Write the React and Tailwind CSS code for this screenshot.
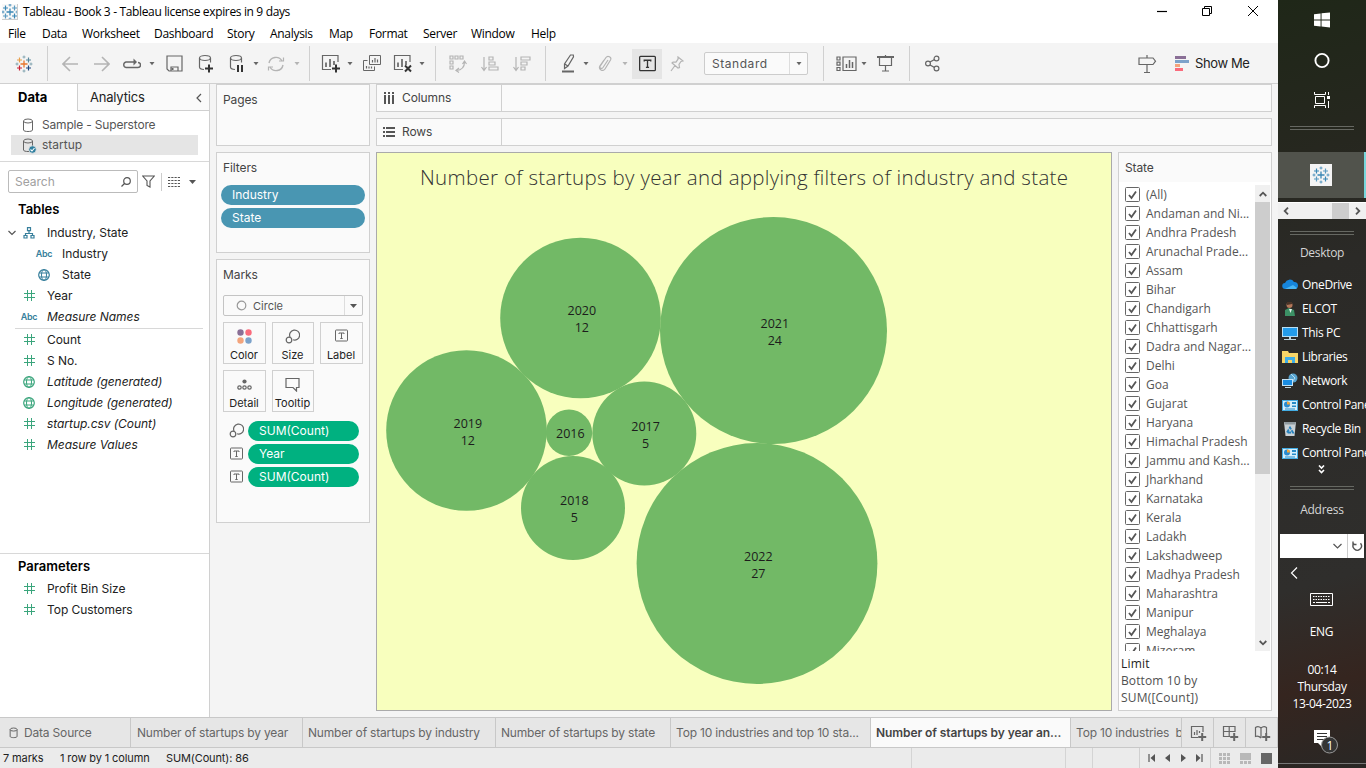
import React from "react";

const STATES = ["(All)", "Andaman and Ni...", "Andhra Pradesh", "Arunachal Prade...", "Assam", "Bihar", "Chandigarh", "Chhattisgarh", "Dadra and Nagar...", "Delhi", "Goa", "Gujarat", "Haryana", "Himachal Pradesh", "Jammu and Kash...", "Jharkhand", "Karnataka", "Kerala", "Ladakh", "Lakshadweep", "Madhya Pradesh", "Maharashtra", "Manipur", "Meghalaya", "Mizoram"];

const BUBBLES = [
  { year: "2020", count: 12, cx: 580.5, cy: 318, r: 80.3 },
  { year: "2021", count: 24, cx: 773.5, cy: 330.5, r: 113.5 },
  { year: "2019", count: 12, cx: 466.5, cy: 430.5, r: 80.3 },
  { year: "2016", cx: 569, cy: 432.8, r: 23.2 },
  { year: "2017", count: 5, cx: 644.3, cy: 433.5, r: 52 },
  { year: "2018", count: 5, cx: 573, cy: 508, r: 52 },
  { year: "2022", count: 27, cx: 757, cy: 563.5, r: 120.4 },
];

function Svg({ w, h, children, className = "" }) {
  return (
    <svg width={w} height={h} viewBox={`0 0 ${w} ${h}`} fill="none" stroke="currentColor" strokeWidth="1.2" className={`block shrink-0 ${className}`}>
      {children}
    </svg>
  );
}

function Caret({ className = "" }) {
  return <Svg w={6} h={4} className={className}><path d="M.5 0h5L3 3.300z" fill="currentColor" stroke="none" /></Svg>;
}

function Sep({ className = "" }) {
  return <div className={`h-[35px] w-px shrink-0 bg-[#d0d0d0] ${className}`} />;
}

function TableauLogo({ mono }) {
  const c = mono ? ["#3a87b5", "#3a87b5", "#5a9ac0", "#5a9ac0", "#3a87b5", "#3a87b5"] : ["#e8762d", "#e8a04c", "#59879b", "#c72035", "#1f457e", "#7199a6"];
  return (
    <Svg w={18} h={18}>
      <path stroke={c[0]} strokeWidth="1.3" d="M9 5.500v7M5.500 9h7" />
      <path stroke={c[1]} d="M4.500 2.500v5M2 5h5" />
      <path stroke={c[2]} d="M13.500 2.500v5M11 5h5" />
      <path stroke={c[3]} d="M4.500 10.500v5M2 13h5" />
      <path stroke={c[4]} d="M13.500 10.500v5M11 13h5" />
      <path stroke={c[5]} strokeWidth=".8" d="M9 .500v3M7.500 2h3M9 14.500v3M7.500 16h3M.500 9h3M2 7.500v3M14.500 9h3M16 7.500v3" />
    </Svg>
  );
}

function Cylinder({ extra }) {
  return (
    <Svg w={16} h={19}>
      <path d={extra ? "M6 15.500C3 15.300 1.500 14.500 1.500 13V4M12.500 4v4.500" : "M1.500 4v9.500c0 3 11 3 11 0V4"} />
      <ellipse cx="7" cy="4" rx="5.500" ry="2.500" />
      {extra === "plus" && <path d="M11 10.500v8M7 14.500h8" stroke="#333" strokeWidth="2" />}
      {extra === "pause" && <path d="M9 11v7M13 11v7" stroke="#333" strokeWidth="2" />}
    </Svg>
  );
}

function DbIcon({ checked, small }) {
  return (
    <svg width={small ? 10 : 13} height={small ? 12 : 15} viewBox="0 0 13 15" fill="none" stroke="#666" className="block shrink-0 overflow-visible">
      <path d="M1.500 3v9c0 2 9 2 9 0V3" strokeWidth={small ? 1.3 : 1} />
      <ellipse cx="6" cy="3" rx="4.500" ry="2" strokeWidth={small ? 1.3 : 1} />
      {checked && <><circle cx="10.500" cy="11.500" r="3.700" fill="#2f7f9f" stroke="#e5e5e5" strokeWidth=".7" /><path d="M8.500 11.500l1.500 1.500 2.500-3" stroke="#fff" strokeWidth="1.100" /></>}
    </svg>
  );
}

function ChartBars({ extra }) {
  return (
    <Svg w={20} h={19}>
      <path d={extra ? "M17 8V1.500H1.500v14H10" : "M1.500 1.500H17v14H1.500z"} />
      <path d="M5 8.500V13M9 5v8M13 7v4" strokeWidth="1.700" />
      {extra === "plus" && <path d="M15 10.500v8M11 14.500h8" stroke="#333" strokeWidth="2" />}
      {extra === "x" && <path d="M12 11.500l6 6M18 11.500l-6 6" stroke="#333" strokeWidth="2" />}
    </Svg>
  );
}

function TBox({ size = 13, w = 1 }) {
  return (
    <svg width={size} height={size} viewBox="0 0 13 13" fill="none" stroke="currentColor" strokeWidth={w} className="block shrink-0">
      <rect x=".5" y="1" width="12" height="11" rx=".7" />
      <path d="M4 5V4h5v1M6.500 4v5.500M5.300 9.500h2.400" />
    </svg>
  );
}

function SizeIcon() {
  return <Svg w={15} h={15}><path d="M5 8A5 5 0 1 1 8 10.800" /><circle cx="4" cy="11" r="2.800" /></Svg>;
}

function FieldIcon({ kind, green }) {
  const tone = green ? "text-[#3aa57c]" : "text-[#377f9c]";
  if (kind === "abc") return <span className={`text-[9px] font-semibold tracking-[-0.3px] ${tone}`}>Abc</span>;
  if (kind === "hash") return <Svg w={11} h={11} className="text-[#3aa57c]"><path d="M3.500 0v11M7.500 0v11M0 3.500h11M0 7.500h11" strokeWidth="1" /></Svg>;
  if (kind === "globe") return <Svg w={12} h={12} className={tone}><circle cx="6" cy="6" r="5.300" /><ellipse cx="6" cy="6" rx="2.500" ry="5.300" strokeWidth="1" /><path d="M1.200 4h9.600M1.200 8h9.600" strokeWidth="1" /></Svg>;
  return <Svg w={12} h={12} className={tone}><path d="M4.500 .700h3v3h-3zM1 8.500h3V11H1zM8 8.500h3V11H8zM6 3.700v2.800M2.500 8.500v-2h7v2" /></Svg>;
}

function Field({ kind, label, italic, green, indent }) {
  return (
    <div className="flex h-[21px] shrink-0 items-center">
      <div className={`flex w-[20px] shrink-0 items-center justify-center ${indent ? "ml-[34px]" : "ml-[19px]"}`}><FieldIcon kind={kind} green={green} /></div>
      <span className={`ml-[8px] whitespace-nowrap text-[12px] tracking-[-0.05px] text-[#222] ${italic ? "italic" : ""}`}>{label}</span>
    </div>
  );
}

function Toolbar() {
  return (
    <div className="flex h-[41px] shrink-0 items-center border-b border-[#d0d0d0] bg-[#f4f4f4] pt-px text-[#666]">
      <div className="ml-[15px]"><TableauLogo /></div>
      <Sep className="ml-[14px]" />
      <Svg w={16} h={16} className="ml-[14px] text-[#b4b4b4]"><path d="M16 8H1M8 1L1 8l7 7" strokeWidth="1.600" /></Svg>
      <Svg w={16} h={16} className="ml-[16px] text-[#b4b4b4]"><path d="M0 8h15M8 1l7 7-7 7" strokeWidth="1.600" /></Svg>
      <Svg w={19} h={12} className="ml-[12px]"><path d="M15 9.500h1a2.500 2.500 0 0 0 0-5M4 9.500h12M14 4H4a2.800 2.800 0 0 0 0 5.500" strokeWidth="1.400" /><path d="M11.500 .500v7L15 4z" fill="currentColor" stroke="none" /></Svg>
      <Caret className="ml-[8px]" />
      <Svg w={17} h={17} className="ml-[11px]"><path d="M1 1h15v15H3l-2-2zM5 16v-4h7v4" /><path d="M6.500 13v2" strokeWidth="2" /></Svg>
      <div className="ml-[15px]"><Cylinder extra="plus" /></div>
      <div className="ml-[15px]"><Cylinder extra="pause" /></div>
      <Caret className="ml-[8px]" />
      <Svg w={18} h={16} className="ml-[8px] text-[#b4b4b4]"><path d="M2 7a7 7 0 0 1 13-2M16 9a7 7 0 0 1-13 2" strokeWidth="1.400" /><path d="M12 5h4.500V1.500M6 11H1.500v3.500" strokeWidth="1.200" /></Svg>
      <Caret className="ml-[9px] text-[#b4b4b4]" />
      <Sep className="ml-[9px]" />
      <div className="ml-[11px]"><ChartBars extra="plus" /></div>
      <Caret className="ml-[6px]" />
      <Svg w={18} h={18} className="-mt-px ml-[10px]"><path strokeWidth="1" d="M6.500 1.500h11v9h-11zM4.500 6.500h-4v10h11v-4" /><path d="M9.500 8.500V6M12 8.500V4M14.500 8.500V5.500M3.500 14.500v-2.500M6 14.500v-2M8.500 14.500v-2" /></Svg>
      <div className="ml-[12px]"><ChartBars extra="x" /></div>
      <Caret className="ml-[6px]" />
      <Sep className="ml-[10px]" />
      <Svg w={18} h={18} className="ml-[13px] text-[#b4b4b4]"><path d="M1 1h3v3H1zM6 1h3v3H6zM11 1h3v3h-3zM1 6h3v3H1zM1 11h3v3H1zM15.500 7c0 5-3 8-8 8.500M13.500 9l2-3 2 3M10 13l-3 2.500 3 2" /></Svg>
      <Svg w={18} h={16} className="ml-[14px] text-[#b4b4b4]"><path d="M3 1v13M.5 11L3 14.500 5.500 11M8 1h4v3H8zM8 6h6v3H8zM8 11h9v3H8z" /></Svg>
      <Svg w={18} h={16} className="ml-[14px] text-[#b4b4b4]"><path d="M3 1v13M.5 11L3 14.500 5.500 11M8 1h9v3H8zM8 6h6v3H8zM8 11h4v3H8z" /></Svg>
      <Sep className="ml-[14px]" />
      <Svg w={14} h={19} className="ml-[15px]"><path d="M9.500 1h2.800l.200 1.800L7 12l-3.500 2.500V10zM3.800 10l3 2" /><path d="M1 17.500h12" strokeWidth="2" /></Svg>
      <Caret className="ml-[8px]" />
      <Svg w={14} h={18} className="ml-[9px] text-[#b4b4b4]"><path d="M10 5L5 12.500c-1.500 2-4 .5-2.700-1.700L8 2.500c1.800-2.600 6-.3 4.500 2.500L7 14c-2 3.300-7 .3-5-3.200L6 5" /></Svg>
      <Caret className="ml-[10px] text-[#b4b4b4]" />
      <div className="ml-[4px] mr-px flex size-[30px] shrink-0 items-center justify-center bg-[#e5e5e5] text-[#333]"><TBox size={17} /></div>
      <Svg w={14} h={16} className="ml-[7px] text-[#b4b4b4]"><path d="M8 1l5 4-2 .5-2 3 .5 3L8 12 2 7l1-1 3 .2 2-3zM5 9.500L1 15" /></Svg>
      <div className="ml-[20px] flex h-[23px] w-[104px] shrink-0 items-center rounded-[2px] border border-[#ccc] bg-[#fafafa]">
        <span className="ml-[7px] flex-1 text-[12px] tracking-[0.55px] text-[#555]">Standard</span>
        <div className="flex h-full w-[18px] items-center justify-center border-l border-[#ddd]"><Caret /></div>
      </div>
      <Sep className="ml-[15px]" />
      <Svg w={21} h={16} className="ml-[12px]"><path d="M1 1h3v3H1zM1 6.200h3v3H1zM1 11.500h3v3H1zM7 1h13v13.500H7z" /><path d="M10.500 8v4M13.500 4v8M16.500 6v6" strokeWidth="1.500" /></Svg>
      <Caret className="ml-[4px]" />
      <Svg w={17} h={17} className="ml-[10px]"><path d="M2.500 3v7.500h12V3M8.500 10.500V16M5 16h7M8.500 0v2" /><path d="M0 2h17" strokeWidth="2" /></Svg>
      <Sep className="ml-[15px]" />
      <Svg w={15} h={17} className="ml-[15px]"><circle cx="3" cy="8.500" r="2.400" /><circle cx="11.500" cy="3.500" r="2.400" /><circle cx="11.500" cy="13.500" r="2.400" /><path d="M5 7l4.500-2.500M5 10l4.500 2.500" strokeWidth="1.400" /></Svg>
      <Svg w={19} h={18} className="ml-[198px]"><path d="M1 3h14l2.500 3.200L15 9.500H1zM9 0v3M9 9.500v8M6 17.500h6" /></Svg>
      <svg width="14" height="16" className="ml-[18px] shrink-0"><path fill="#8a6f96" d="M0 0h11v3H0z" /><path fill="#7ca2ca" d="M0 4h14v3H0z" /><path fill="#f3a47c" d="M0 8h5v3H0z" /><path fill="#fa6b7c" d="M0 12h8v3H0z" /></svg>
      <span className="ml-[6px] whitespace-nowrap text-[13px] tracking-[-0.4px] text-[#222]">Show Me</span>
    </div>
  );
}

function DataPane() {
  return (
    <aside className="flex w-[210px] shrink-0 flex-col border-r border-[#d0d0d0] bg-white">
      <div className="flex h-[27px] shrink-0">
        <div className="w-[77px] pl-[18px] text-[13px] font-bold leading-[27px] text-black">Data</div>
        <div className="flex flex-1 items-center border-b border-l border-[#d0d0d0] bg-[#fafafa] pl-[12px] pt-px text-[13px] tracking-[-0.2px] text-[#222]">Analytics<Svg w={6} h={10} className="ml-auto mr-[7px] text-[#555]"><path d="M5 1L1 5l4 4" /></Svg></div>
      </div>
      <div className="h-[51px] shrink-0 border-b border-[#d8d8d8] pt-[4px] text-[12px] tracking-[-0.18px] text-[#555]">
        <div className="ml-[11px] flex h-[20px] items-center pl-[11px]"><DbIcon /><span className="ml-[7px]">Sample - Superstore</span></div>
        <div className="ml-[11px] mr-[11px] flex h-[20px] items-center bg-[#e5e5e5] pl-[11px] tracking-normal"><DbIcon checked /><span className="ml-[7px]">startup</span></div>
      </div>
      <div className="mt-[8px] flex h-[23px] shrink-0 items-center text-[#555]">
        <div className="ml-[8px] flex h-[23px] w-[130px] items-center rounded-[2px] border border-[#bbb] pl-[6px] text-[12px] text-[#a0a0a0]">Search<Svg w={10} h={10} className="ml-auto mr-[6px] text-[#555]"><circle cx="6" cy="4" r="3.300" /><path d="M3.500 6.500L.5 9.500" /></Svg></div>
        <Svg w={13} h={13} className="ml-[4px]"><path d="M.7 1h11.600L8 6v6L5 10.500V6z" strokeWidth="1.1" /></Svg>
        <div className="ml-[6px] h-[18px] w-px bg-[#ccc]" />
        <Svg w={12} h={10} className="ml-[6px]"><path d="M0 .500h12M0 3.500h12M0 6.500h12M0 9.500h12" strokeWidth="1" strokeDasharray="2.200 1.067" /></Svg>
        <Svg w={7} h={4} className="ml-[9px]"><path d="M0 0h7L3.500 4z" fill="currentColor" stroke="none" /></Svg>
      </div>
      <div className="ml-[18px] mt-[4px] h-[25px] shrink-0 text-[13px] font-semibold leading-[24px] text-black">Tables</div>
      <div className="flex h-[21px] shrink-0 items-center">
        <Svg w={8} h={6} className="ml-[8px] text-[#555]"><path d="M.5 1L4 4.500 7.500 1" /></Svg>
        <div className="ml-[7px]"><FieldIcon kind="tree" /></div><span className="ml-[12px] text-[12px] tracking-[-0.05px] text-[#222]">Industry, State</span>
      </div>
      <Field kind="abc" label="Industry" indent />
      <Field kind="globe" label="State" indent />
      <Field kind="hash" label="Year" />
      <Field kind="abc" label="Measure Names" italic />
      <div className="ml-[15px] mr-[6px] mt-px h-px shrink-0 bg-[#d8d8d8]" />
      <Field kind="hash" label="Count" />
      <Field kind="hash" label="S No." />
      <Field kind="globe" label="Latitude (generated)" green italic />
      <Field kind="globe" label="Longitude (generated)" green italic />
      <Field kind="hash" label="startup.csv (Count)" italic />
      <Field kind="hash" label="Measure Values" italic />
      <div className="mt-auto h-[164px] shrink-0 border-t border-[#d8d8d8]">
        <div className="ml-[18px] h-[24px] text-[13px] font-semibold leading-[24px] text-black">Parameters</div>
        <Field kind="hash" label="Profit Bin Size" />
        <Field kind="hash" label="Top Customers" />
      </div>
    </aside>
  );
}

function MarkButton({ label, children }) {
  return <div className="flex h-[42px] flex-col items-center justify-between border border-[#d0d0d0] bg-[#fafafa] pr-px pt-[6px]"><div className="text-[#666]">{children}</div><span className="text-[11px] leading-[16px] text-[#222]">{label}</span></div>;
}

function MarkPill({ icon, label }) {
  return <div className="flex h-[23px] items-center text-[#666]"><div className="ml-[12px] flex w-[15px] justify-center">{icon}</div><div className="ml-[4px] h-[20px] w-[111px] rounded-full bg-[#00b180] pl-[11px] text-[12px] leading-[20px] text-white">{label}</div></div>;
}

function Cards() {
  const card = "border border-[#d0d0d0] bg-[#fafafa]";
  const head = "pl-[6px] text-[12px] leading-[30px] tracking-[-0.1px] text-[#444]";
  return (
    <div className="flex w-[154px] shrink-0 flex-col gap-[6px]">
      <div className={`h-[62px] ${card}`}><div className={head}>Pages</div></div>
      <div className={`h-[101px] ${card}`}>
        <div className={head}>Filters</div>
        <div className="mx-[4px] mt-[2px] flex flex-col gap-[3px]">
          <div className="h-[20px] rounded-full bg-[#4996b2] pl-[11px] text-[12px] leading-[20px] text-white">Industry</div>
          <div className="h-[20px] rounded-full bg-[#4996b2] pl-[11px] text-[12px] leading-[20px] text-white">State</div>
        </div>
      </div>
      <div className={`h-[264px] ${card}`}>
        <div className={head}>Marks</div>
        <div className="mx-[6px] mt-[5px] flex h-[21px] items-center rounded-[2px] border border-[#c4c4c4] text-[11px] text-[#555]">
          <Svg w={11} h={11} className="ml-[12px] text-[#999]"><circle cx="5.500" cy="5.500" r="4.300" /></Svg>
          <span className="ml-[6px] flex-1 pt-px">Circle</span>
          <div className="flex h-full w-[18px] items-center justify-center border-l border-[#ddd] text-[#555]"><Svg w={7} h={4}><path d="M0 0h7L3.500 4z" fill="currentColor" stroke="none" /></Svg></div>
        </div>
        <div className="mx-[6px] mt-[6px] grid grid-cols-[43px_42px_43px] gap-x-[6px] gap-y-[6px]">
          <MarkButton label="Color"><svg width="15" height="15"><circle cx="3.500" cy="3.500" r="3.200" fill="#8a6f96" /><circle cx="11.500" cy="3.500" r="3.200" fill="#fa6b7c" /><circle cx="3.500" cy="11.500" r="3.200" fill="#f3a47c" /><circle cx="11.500" cy="11.500" r="3.200" fill="#7ca2ca" /></svg></MarkButton>
          <MarkButton label="Size"><SizeIcon /></MarkButton>
          <MarkButton label="Label"><TBox /></MarkButton>
          <MarkButton label="Detail"><Svg w={15} h={15}><circle cx="7.500" cy="4.500" r="2.100" fill="currentColor" stroke="none" /><circle cx="2.500" cy="10.500" r="1.700" /><circle cx="7.500" cy="10.500" r="1.700" /><circle cx="12.500" cy="10.500" r="1.700" /></Svg></MarkButton>
          <MarkButton label="Tooltip"><Svg w={15} h={15}><path d="M1 1.500h13v9h-2.500v3.500L8 10.500H1z" /></Svg></MarkButton>
        </div>
        <div className="mt-[7px]">
          <MarkPill icon={<SizeIcon />} label="SUM(Count)" />
          <MarkPill icon={<TBox />} label="Year" />
          <MarkPill icon={<TBox />} label="SUM(Count)" />
        </div>
      </div>
    </div>
  );
}

function Shelf({ label, icon }) {
  return (
    <div className="flex h-[28px] shrink-0 items-center border border-[#d0d0d0] bg-[#fafafa]">
      <div className="flex h-full w-[125px] items-center border-r border-[#d0d0d0] pl-[6px] text-[#555]">{icon}<span className="ml-[7px] text-[12px] tracking-[-0.1px] text-[#444]">{label}</span></div>
    </div>
  );
}

function Chart() {
  return (
    <div className="h-[559px] w-[736px] shrink-0 border border-[#aaa] bg-[#f8ffbe]">
      <svg width="734" height="557" viewBox="377 153 734 557" className="block">
        <text x="744" y="185" textAnchor="middle" className="fill-[#333] font-['Open_Sans'] text-[20.5px] font-light" textLength="648">Number of startups by year and applying filters of industry and state</text>
        {BUBBLES.map((b) => (
          <g key={b.year}>
            <circle cx={b.cx} cy={b.cy} r={b.r} fill="#72b966" />
            <text x={b.cx + 1.300} y={b.count ? b.cy - 2.700 : b.cy + 5.500} textAnchor="middle" className="fill-[#1c1c1c] font-['Open_Sans'] text-[12.5px]">{b.year}</text>
            {b.count && <text x={b.cx + 1.300} y={b.cy + 14.300} textAnchor="middle" className="fill-[#1c1c1c] font-['Open_Sans'] text-[12.5px]">{b.count}</text>}
          </g>
        ))}
      </svg>
    </div>
  );
}

function StateFilter() {
  return (
    <div className="ml-[6px] flex h-[559px] w-[154px] shrink-0 flex-col border border-[#d0d0d0] bg-white">
      <div className="h-[29px] shrink-0 bg-[#fafafa] pl-[6px] text-[12px] leading-[30px] tracking-[-0.1px] text-[#444]">State</div>
      <div className="mt-[3px] flex h-[466px] shrink-0 overflow-hidden">
        <div className="w-[136px] shrink-0">
          {STATES.map((s) => (
            <div key={s} className="flex h-[19px] items-center pl-[6px]">
              <svg width="15" height="15" className="shrink-0" fill="none"><rect x=".5" y=".5" width="14" height="14" rx="1" stroke="#666" /><path d="M4 8l2.500 3L11 4.500" stroke="#555" strokeWidth="1.800" /></svg>
              <span className="ml-[6px] whitespace-nowrap font-['Open_Sans'] text-[12px] text-[#555]">{s}</span>
            </div>
          ))}
        </div>
        <div className="flex w-[15px] shrink-0 flex-col items-center bg-[#f0f0f0] text-[#555]">
          <div className="flex h-[17px] shrink-0 items-center"><Svg w={8} h={6}><path d="M.7 5L4 1.700 7.300 5" strokeWidth="1.800" /></Svg></div>
          <div className="h-[272px] w-full shrink-0 bg-[#cdcdcd]" />
          <div className="mt-auto flex h-[17px] items-center"><Svg w={8} h={6}><path d="M.7 1L4 4.300 7.300 1" strokeWidth="1.800" /></Svg></div>
        </div>
      </div>
      <div className="pl-[2px] pt-[4px] font-['Open_Sans'] text-[12px] leading-[17px] text-[#505050]"><div className="font-medium tracking-[0.2px] text-[#222]">Limit</div><div className="tracking-[0.1px]">Bottom 10 by</div><div className="tracking-[0.2px]">SUM([Count])</div></div>
    </div>
  );
}

function NewTab({ kind }) {
  return (
    <div className="flex w-[32px] shrink-0 items-center justify-center border-r border-[#c8c8c8] pl-[2px] pt-px text-[#666]">
      <Svg w={17} h={16}>
        {kind === "sheet" && <path d="M13 7V1.500H1.500v11H8M4.500 10V7M7 10V5M9.500 8V6" />}
        {kind === "board" && <path d="M13 7V1.500H1.500v10H8M1.500 6.500H13M7.200 1.500v10" />}
        {kind === "story" && <path d="M7 3v10M7 3C5 1 3 1.300 1.500 2.500v9C3 11 5 11 7 13M7 3c2-2 4-1.700 5.500-.5V8" />}
        <path d="M12.200 8v8M8.200 12h8" strokeWidth="2" />
      </Svg>
    </div>
  );
}

function SheetTabs() {
  const tab = "shrink-0 overflow-hidden whitespace-nowrap border-r border-[#c8c8c8] leading-[30px]";
  return (
    <div className="flex h-[31px] shrink-0 border-y border-[#c8c8c8] bg-[#e6e6e6] text-[12px] tracking-[-0.18px] text-[#666]">
      <div className={`${tab} flex w-[131px] items-center pl-[9px]`}><DbIcon small /><span className="ml-[5px]">Data Source</span></div>
      <div className={`${tab} w-[172px] pl-[6px]`}>Number of startups by year</div>
      <div className={`${tab} w-[193px] pl-[5px]`}>Number of startups by industry</div>
      <div className={`${tab} w-[175px] pl-[5px]`}>Number of startups by state</div>
      <div className={`${tab} w-[200px] pl-[5px]`}>Top 10 industries and top 10 sta...</div>
      <div className={`${tab} w-[200px] bg-[#fafafa] pl-[5px] font-semibold tracking-[-0.08px] text-[#444]`}>Number of startups by year an...</div>
      <div className={`${tab} w-[111px] whitespace-pre pl-[5px]`}>{"Top 10 industries  by"}</div>
      <NewTab kind="sheet" /><NewTab kind="board" /><NewTab kind="story" />
    </div>
  );
}

function StatusBar() {
  return (
    <div className="flex h-[20px] shrink-0 items-center bg-[#ebebeb] text-[11px] tracking-[-0.12px] text-[#222]">
      <span className="w-[57px] pl-[3px]">7 marks</span><span className="w-[107px] pl-[3px]">1 row by 1 column</span><span className="ml-[2px] w-[745px]">SUM(Count): 86</span>
      <div className="flex h-full flex-1">
        <div className="w-[154px] border-l border-[#d4d4d4]" /><div className="w-[27px] border-l border-[#d4d4d4]" /><div className="flex-1 border-l border-[#d4d4d4]" />
      </div>
      <div className="flex h-full w-[71px] shrink-0 items-center justify-between border-l border-[#d0d0d0] pl-[8px] pr-[7px] text-[#555]">
        <Svg w={7} h={8}><path d="M1 0v8" /><path d="M7 0v8L2.500 4z" fill="currentColor" stroke="none" /></Svg>
        <Svg w={5} h={8}><path d="M5 0v8L0 4z" fill="currentColor" stroke="none" /></Svg>
        <Svg w={5} h={8}><path d="M0 0v8l5-4z" fill="currentColor" stroke="none" /></Svg>
        <Svg w={7} h={8}><path d="M6 0v8" /><path d="M0 0v8l4.500-4z" fill="currentColor" stroke="none" /></Svg>
      </div>
      <div className="flex h-full w-[68px] shrink-0 items-center gap-[10px] border-l border-[#d0d0d0] pl-[8px] text-[#b8b8b8]">
        <Svg w={11} h={11}><path d="M0 1.500h11M0 5.500h11M0 9.500h11" strokeWidth="3" strokeDasharray="3 1" /></Svg>
        <Svg w={11} h={11}><path d="M0 3.500h11" strokeWidth="7" /><path d="M0 9.500h11" strokeWidth="3" strokeDasharray="3 1" /></Svg>
        <div className="size-[11px] bg-[#666]" />
      </div>
    </div>
  );
}

const DESK_ICONS = {
  cloud: <><path d="M3.500 12a3 3 0 0 1-.5-6 5 5 0 0 1 9-1 3.600 3.600 0 0 1 1.500 7z" fill="#1685db" /><path d="M3 12l8-4 4 3-1 1z" fill="#48b5f3" /></>,
  user: <><circle cx="7.500" cy="4" r="3" fill="#b4785a" /><path d="M5 4V1h5v2z" fill="#4a3428" /><path d="M3 15V9l4-2 5 2 1 6z" fill="#3c9165" /><path d="M7 8l1.500 4L10 8z" fill="#e9f0ee" /></>,
  pc: <><path d="M0 2h16v10H0z" fill="#b8dff3" /><path d="M1 3h14v8H1z" fill="#249ce9" /><path d="M2 14h12v1H2zM7 12h2v2H7z" fill="#bdd6df" /></>,
  folder: <><path d="M0 2h6l1 2h9v10H0z" fill="#f7d568" /><path d="M3 8h10v6h-3v-3H6v3H3z" fill="#3eaee8" /></>,
  network: <><circle cx="11" cy="5" r="4.500" fill="#58a4cf" /><path d="M9 1l4 4-3 4" stroke="#b7dff1" fill="none" /><path d="M0 6h11v7H0z" fill="#c4e3f5" /><path d="M1 7h9v5H1z" fill="#1a8de2" /><path d="M3 14h6v1H3z" fill="#bdd6df" /></>,
  control: <><path d="M0 3h16v11H0z" fill="#43ade4" /><path d="M1 4h14v9H1z" fill="#d5eefa" /><circle cx="5" cy="7.500" r="3" fill="#298bd0" /><path d="M5 7.500v-3a3 3 0 0 1 3 3z" fill="#f3a739" /><path d="M10 5h4v2h-4zM10 8.500h4V10h-4zM3 11.500h10v1H3z" fill="#258bc7" /></>,
  bin: <><path d="M2 1l1.500 14h9L14 1z" fill="#c9d0d4" /><path d="M2 1h12l-1 2.500H3z" fill="#8f999e" /><path d="M5 11.500l3-5 3 5z" fill="none" stroke="#2582bd" strokeWidth="1.800" strokeDasharray="3.500 1" /></>,
};

function TaskRule({ className = "" }) {
  return <div className={`mx-[12px] h-[4px] shrink-0 border-y border-[#666862] ${className}`} />;
}

function Taskbar() {
  const items = [["cloud", "OneDrive"], ["user", "ELCOT"], ["pc", "This PC"], ["folder", "Libraries"], ["network", "Network"], ["control", "Control Panel"], ["bin", "Recycle Bin"], ["control", "Control Panel"]];
  return (
    <aside className="flex h-[768px] w-[88px] shrink-0 flex-col overflow-hidden bg-[linear-gradient(165deg,#1f2718_0%,#26271f_20%,#2b2a27_35%,#2f2e2c_75%,#35251f_88%,#292725_100%)] font-['Open_Sans'] text-[12px] text-white">
      <div className="flex h-[126px] shrink-0 flex-col items-center">
        <svg width="16" height="16" viewBox="0 0 17 16" className="mt-[12px] shrink-0" fill="#fff"><path d="M0 2l7-1v6.500H0zM8 .9L17 0v7.500H8zM0 8.500h7V15l-7-1zM8 8.500h9V16l-9-1z" /></svg>
        <svg width="16" height="17" viewBox="0 0 17 17" className="mt-[24px] shrink-0" fill="none" stroke="#fff" strokeWidth="2"><circle cx="8.500" cy="8.500" r="7" /></svg>
        <svg width="16" height="16" className="mt-[23px] shrink-0" fill="none" stroke="#fff"><path d="M1.500 4.500h9v7h-9zM.5 0v2.500h11V0M.5 16v-2.500h11V16M14.500 0v3M14.500 9v7" /><path d="M13 4h3v3h-3z" fill="#fff" stroke="none" /></svg>
      </div>
      <TaskRule />
      <div className="mt-[22px] flex h-[46px] shrink-0 items-center justify-center border-r-2 border-[#78d7dc] bg-[#51534c]"><div className="flex size-[22px] items-center justify-center bg-[#f4f4f4]"><TableauLogo mono /></div></div>
      <div className="mt-[4px] flex h-[17px] shrink-0 items-center border-t border-white bg-[#f0f0f0] text-[#555]"><Svg w={6} h={8} className="ml-[5px]"><path d="M5 .7L1.700 4 5 7.300" strokeWidth="1.800" /></Svg><div className="ml-[43px] h-full w-[17px] bg-[#cdcdcd]" /><Svg w={6} h={8} className="ml-[6px]"><path d="M1 .7L4.300 4 1 7.300" strokeWidth="1.800" /></Svg></div>
      <TaskRule className="mt-[12px]" />
      <div className="mt-[5px] h-[33px] shrink-0 pt-[1px] text-center leading-[24px] tracking-[-0.3px] text-[#d5d5d5]">Desktop</div>
      <div className="shrink-0">
        {items.map(([k, label], i) => <div key={i} className="flex h-[24px] items-center"><svg width="16" height="16" className="ml-[4px] shrink-0">{DESK_ICONS[k]}</svg><span className="ml-[4px] whitespace-nowrap tracking-[-0.35px]">{label}</span></div>)}
      </div>
      <Svg w={7} h={9} className="ml-[40px]"><path d="M1 .5L3.500 3 6 .5M1 5l2.500 2.500L6 5" strokeWidth="1.600" /></Svg>
      <TaskRule className="mt-[12px]" />
      <div className="mt-[7px] h-[24px] shrink-0 pt-px text-center leading-[24px] tracking-[-0.25px] text-[#d5d5d5]">Address</div>
      <div className="mx-[2px] mt-[13px] flex h-[24px] shrink-0 items-center bg-white text-[#555]"><Svg w={9} h={6} className="ml-[53px]"><path d="M.5 1l4 4 4-4" /></Svg><div className="ml-[5px] h-full w-px shrink-0 bg-[#ccc]" /><Svg w={11} h={12} className="ml-[4px]"><path d="M2 3.300a4.200 4.200 0 1 0 6.500 0M1 1.500v3h3.500" strokeWidth="1.400" /></Svg></div>
      <Svg w={8} h={12} className="ml-[12px] mt-[9px]"><path d="M7 .5L1.500 6 7 11.500" /></Svg>
      <svg width="23" height="13" className="ml-[32px] mt-[14px] shrink-0" fill="none" stroke="#fff"><path d="M.5 .5h22v12H.5z" /><path d="M3 3.500h17M3 6.500h17" strokeDasharray="1.500 1" /><path d="M3 9.500h2M6 9.500h11M18 9.500h2" /></svg>
      <div className="mt-[14px] h-[24px] shrink-0 pr-px text-center leading-[24px] tracking-[-0.3px]">ENG</div>
      <div className="mt-[17px] h-[51px] shrink-0 text-center leading-[17px] tracking-[-0.35px]"><div>00:14</div><div>Thursday</div><div>13-04-2023</div></div>
      <svg width="26" height="26" className="ml-[35px] mt-[17px] shrink-0"><path d="M1 1h16v13H9v4l-4-4H1z" fill="#fff" /><path d="M4 4.500h10M4 7.500h10M4 10.500h8" stroke="#333" /><circle cx="16.500" cy="16" r="8" fill="#353535" stroke="#999" /><text x="13.500" y="20.500" fill="#fff" fontSize="12" fontFamily="Open Sans">1</text></svg>
      <div className="mb-[4px] mt-auto h-px shrink-0 bg-[#777]" />
    </aside>
  );
}

export default function App() {
  const menus = [["File", "w-[34px]"], ["Data", "w-[40px]"], ["Worksheet", "w-[72px]"], ["Dashboard", "w-[73px]"], ["Story", "w-[43px]"], ["Analysis", "w-[59px]"], ["Map", "w-[40px]"], ["Format", "w-[54px]"], ["Server", "w-[48px]"], ["Window", "w-[60px]"], ["Help", "w-[40px]"]];
  return (
    <div className="flex h-[768px] w-[1366px] overflow-hidden font-['Inter',sans-serif]">
      <div className="flex w-[1278px] shrink-0 flex-col bg-[#f4f4f4]">
        <header className="h-[43px] shrink-0 bg-white font-['Open_Sans'] text-[12px] text-black">
          <div className="flex h-[24px] items-center">
            <div className="ml-[2px] flex size-[16px] items-center justify-center overflow-hidden border-b border-r border-[#ccc] bg-[#f8f8f8]"><TableauLogo mono /></div>
            <span className="ml-[5px] whitespace-nowrap tracking-[-0.35px]">Tableau - Book 3 - Tableau license expires in 9 days</span>
            <div className="ml-auto flex items-center pb-[3px]"><Svg w={10} h={10} className="mr-[35px]"><path d="M0 5.500h10" /></Svg><Svg w={10} h={10} className="mr-[36px]"><path d="M.5 2.500h7v7h-7zM2.500 2.500v-2h7v7h-2" strokeWidth="1" /></Svg><Svg w={10} h={10} className="mr-[20px]"><path d="M0 0l10 10M10 0L0 10" strokeWidth="1" /></Svg></div>
          </div>
          <nav className="flex h-[19px] items-center pl-[8px] tracking-[-0.3px]">{menus.map(([m, w]) => <span key={m} className={`${w} shrink-0 whitespace-nowrap`}>{m}</span>)}</nav>
        </header>
        <Toolbar />
        <div className="flex h-[633px] shrink-0">
          <DataPane />
          <div className="ml-[6px] flex gap-[6px]">
            <Cards />
            <div className="flex w-[896px] flex-col gap-[6px]">
              <Shelf label="Columns" icon={<Svg w={12} h={12}><path d="M2 0v2M6 0v2M10 0v2M2 3v9M6 3v9M10 3v9" strokeWidth="2" /></Svg>} />
              <Shelf label="Rows" icon={<Svg w={12} h={11}><path d="M0 1h2M0 5h2M0 9h2M3 1h9M3 5h9M3 9h9" strokeWidth="2" /></Svg>} />
              <div className="flex"><Chart /><StateFilter /></div>
            </div>
          </div>
        </div>
        <SheetTabs />
        <StatusBar />
      </div>
      <Taskbar />
    </div>
  );
}
